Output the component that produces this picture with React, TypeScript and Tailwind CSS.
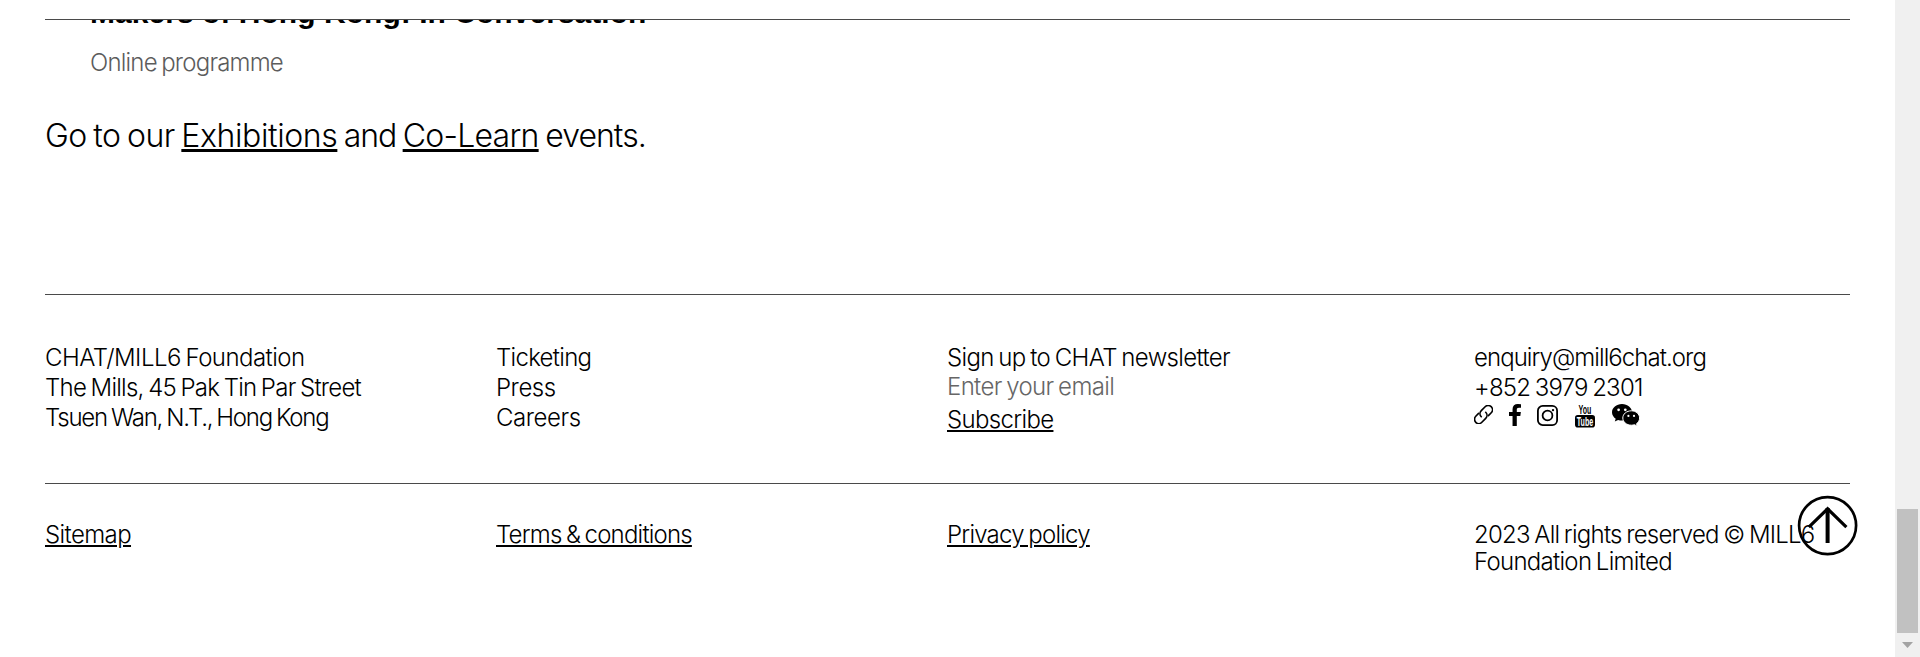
import type { ReactNode } from "react";

const link = "underline decoration-2 underline-offset-2";

function LinkIcon() {
  return (
    <svg className="mt-px h-[19px] w-[19px]" viewBox="0.900 0.900 16.200 16.200" fill="none" stroke="#000" strokeWidth="1.4" strokeLinecap="round">
      <path d="M7.1 10.9a3.7 3.7 0 0 1 0-5.200L10.400 2.400a3.600 3.600 0 0 1 5.200 5.100L13.200 9.900" />
      <path d="M10.9 7.1a3.7 3.7 0 0 1 0 5.200L7.600 15.600a3.600 3.600 0 0 1-5.200-5.100L4.800 8.100" />
    </svg>
  );
}

function FacebookIcon() {
  return (
    <svg className="ml-4 h-[22px] w-[12px]" viewBox="95 0 864 1664" preserveAspectRatio="none">
      <path d="M959 12v264h-157q-86 0-116 36t-30 108v189h293l-39 296h-254v759h-306v-759h-255v-296h255v-218q0-186 104-288.5t277-102.5q147 0 228 12z" />
    </svg>
  );
}

function InstagramIcon() {
  return (
    <svg className="mt-px ml-4 h-[21px] w-[21px]" viewBox="0 0 21 21" fill="none" stroke="#000" strokeWidth="1.8">
      <rect x="0.9" y="0.9" width="19.2" height="19.2" rx="4.8" />
      <circle cx="10.5" cy="10.5" r="4.9" />
      <circle cx="16" cy="5.1" r="1.2" fill="#000" stroke="none" />
    </svg>
  );
}

function YoutubeIcon() {
  return (
    <svg className="ml-[17px] h-6 w-5" viewBox="0 0 20 24" fontFamily="Liberation Sans Narrow, Liberation Sans, sans-serif" fontWeight="700">
      <text x="3.6" y="9.6" fontSize="13" textLength="12.8" lengthAdjust="spacingAndGlyphs">You</text>
      <rect x="0" y="11" width="20" height="12.600" rx="2.8" />
      <text x="1.8" y="21.8" fontSize="12" fill="#fff" textLength="16.4" lengthAdjust="spacingAndGlyphs">Tube</text>
    </svg>
  );
}

function WechatIcon() {
  return (
    <svg className="ml-[17px] h-[22px] w-7" viewBox="0 0 28 22">
      <path d="M10 0C4.4 0 0 3.7 0 8.3c0 2.6 1.4 4.9 3.7 6.4L2.8 17.6l3.3-1.7c1.2.4 2.5.6 3.9.6C15.6 16.500 20 12.900 20 8.300S15.600 0 10 0z" />
      <path d="M19.400 6.800c-4.800 0-8.600 3.200-8.600 7.200s3.800 7.200 8.600 7.200c1.100 0 2.200-.2 3.100-.5l2.800 1.500-.8-2.500c1.900-1.300 3.100-3.300 3.100-5.700 0-4-3.600-7.200-8.200-7.200z" stroke="#fff" strokeWidth="1" />
      <g fill="#fff">
        <circle cx="6.600" cy="5.800" r="1.350" />
        <circle cx="13.300" cy="5.800" r="1.350" />
        <circle cx="16.400" cy="11.900" r="1.100" />
        <circle cx="22" cy="11.900" r="1.100" />
      </g>
    </svg>
  );
}

function Row({ children, className }: { children: ReactNode; className: string }) {
  return <div className={`grid grid-cols-[451px_451px_527px_1fr] border-t border-[#4a4a4a] whitespace-nowrap ${className}`}>{children}</div>;
}

function BackToTop() {
  return (
    <a href="#top" aria-label="Back to top" className="absolute top-[495px] left-[1797px]">
      <svg className="h-[61px] w-[61px]" viewBox="0 0 61 61" fill="none" stroke="#000">
        <circle cx="30.600" cy="30.600" r="28.500" strokeWidth="2.700" />
        <path d="M11.800 32.200 30.600 13.800 49.400 32.200" strokeWidth="3.200" />
        <path d="M30.600 13v35" strokeWidth="4" />
      </svg>
    </a>
  );
}

export default function App() {
  return (
    <div className="relative flex h-[657px] overflow-hidden bg-white font-[Inter,Arial,sans-serif] text-2xl font-[350] text-black [word-spacing:-1.5px]">
      <div className="flex-1 pr-[45px] pl-[45px]">
        <main className="pt-[19px]">
          <div className="h-[29px] overflow-hidden border-t border-[#4a4a4a] pl-[45px]">
            <h3 className="-mt-[23px] font-['Liberation_Sans',Arial,sans-serif] text-[30px] leading-8 font-bold tracking-[0.040px] [word-spacing:0px]">Makers of Hong Kong: In Conversation</h3>
          </div>
          <p className="pl-[45px] leading-[30px] tracking-[-0.800px] text-[#5c5c5c]">Online programme</p>
          <p className="mt-[38px] text-[32px] leading-10">
            <span className="tracking-[-0.650px]">Go to our </span>
            <a href="#exhibitions" className="tracking-[-0.400px] underline decoration-3 underline-offset-2">Exhibitions</a>
            <span className="tracking-[-1.080px]"> and </span>
            <a href="#co-learn" className="tracking-[-0.740px] underline decoration-3 underline-offset-2">Co-Learn</a>
            <span className="tracking-[-0.950px]"> events.</span>
          </p>
        </main>
        <footer className="mt-[138px]">
          <Row className="h-[189px] pt-12 leading-[30px]">
            <address className="not-italic">
              <p className="tracking-[-0.540px]">CHAT/MILL6 Foundation</p>
              <p className="tracking-[-0.750px]">The Mills, 45 Pak Tin Par Street</p>
              <p className="tracking-[-1.220px]">Tsuen Wan, N.T., Hong Kong</p>
            </address>
            <nav>
              <p className="tracking-[-0.700px]">Ticketing</p>
              <p className="tracking-[-0.450px]">Press</p>
              <p className="tracking-[-0.450px]">Careers</p>
            </nav>
            <div>
              <p className="tracking-[-0.650px]">Sign up to CHAT newsletter</p>
              <p className="h-8 leading-7 tracking-[-0.650px] text-[#666]">Enter your email</p>
              <p className="tracking-[-0.660px]"><a href="#subscribe" className={link}>Subscribe</a></p>
            </div>
            <div>
              <p className="tracking-[-0.940px]">enquiry@mill6chat.org</p>
              <p className="tracking-[-0.780px]">+852 3979 2301</p>
              <div className="flex items-start pt-px">
                <LinkIcon />
                <FacebookIcon />
                <InstagramIcon />
                <YoutubeIcon />
                <WechatIcon />
              </div>
            </div>
          </Row>
          <Row className="pt-[37px] leading-[27px]">
            <p className="tracking-[-0.600px]"><a href="#sitemap" className={link}>Sitemap</a></p>
            <p className="tracking-[-0.800px]"><a href="#terms" className={link}>Terms &amp; conditions</a></p>
            <p className="tracking-[-0.770px]"><a href="#privacy" className={link}>Privacy policy</a></p>
            <div>
              <p className="tracking-[-0.760px]">2023 All rights reserved © MILL6</p>
              <p className="tracking-[-0.710px]">Foundation Limited</p>
            </div>
          </Row>
        </footer>
      </div>
      <div className="flex w-[25px] flex-col items-center justify-end bg-[#f0f0f0] pb-[9px]">
        <div className="h-[124px] w-[21px] bg-[#c1c1c1]" />
        <svg className="mt-[9px] h-[6px] w-[11px]" viewBox="0 0 11 6" fill="#a3a3a3"><path d="M0 0h11L5.500 6z" /></svg>
      </div>
      <BackToTop />
    </div>
  );
}
